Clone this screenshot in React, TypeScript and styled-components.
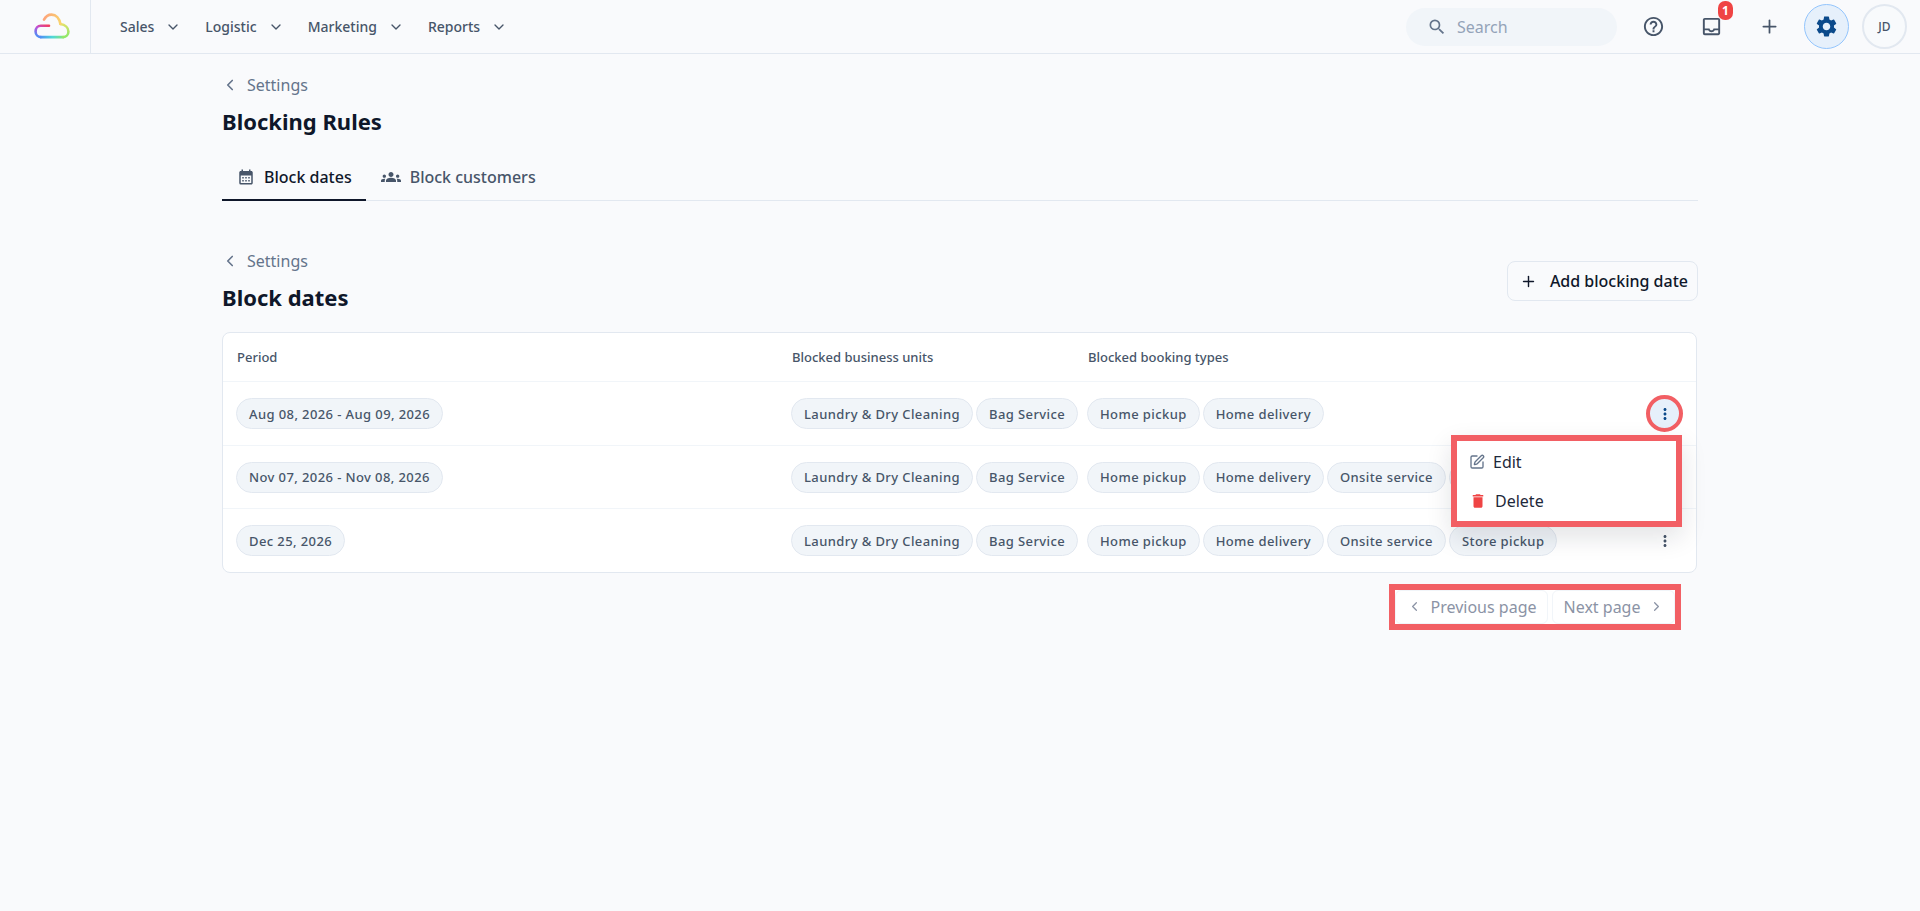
import React from 'react'
import styled, { createGlobalStyle } from 'styled-components'
import { ChevronDown, ChevronLeft, ChevronRight, Plus, SquarePen } from 'lucide-react'
import {
  MdCalendarMonth,
  MdDelete,
  MdGroups,
  MdMoreVert,
  MdOutlineHelpOutline,
  MdOutlineInbox,
  MdSearch,
  MdSettings,
} from 'react-icons/md'

const navItems = ['Sales', 'Logistic', 'Marketing', 'Reports']

const units = ['Laundry & Dry Cleaning', 'Bag Service']

const rows = [
  { period: 'Aug 08, 2026 - Aug 09, 2026', types: ['Home pickup', 'Home delivery'], active: true },
  {
    period: 'Nov 07, 2026 - Nov 08, 2026',
    types: ['Home pickup', 'Home delivery', 'Onsite service', 'Store pickup'],
    active: false,
  },
  {
    period: 'Dec 25, 2026',
    types: ['Home pickup', 'Home delivery', 'Onsite service', 'Store pickup'],
    active: false,
  },
]

function Logo() {
  return (
    <svg width="36" height="26" viewBox="0 0 36 26" fill="none" strokeWidth="2.6" strokeLinecap="round">
      <defs>
        <linearGradient id="lg1" gradientUnits="userSpaceOnUse" x1="14" y1="12" x2="6" y2="25">
          <stop offset="0" stopColor="#f43f5e" />
          <stop offset="0.5" stopColor="#c04fd8" />
          <stop offset="1" stopColor="#4f8ef5" />
        </linearGradient>
        <linearGradient id="lg2" gradientUnits="userSpaceOnUse" x1="6" y1="24" x2="31" y2="24">
          <stop offset="0" stopColor="#4f8ef5" />
          <stop offset="0.5" stopColor="#4fd8d8" />
          <stop offset="1" stopColor="#8fe86a" />
        </linearGradient>
        <linearGradient id="lg3" gradientUnits="userSpaceOnUse" x1="31" y1="24" x2="26" y2="9">
          <stop offset="0" stopColor="#8fe86a" />
          <stop offset="1" stopColor="#f5e06a" />
        </linearGradient>
        <linearGradient id="lg4" gradientUnits="userSpaceOnUse" x1="26" y1="10" x2="10" y2="6">
          <stop offset="0" stopColor="#f9d36e" />
          <stop offset="1" stopColor="#fda57a" />
        </linearGradient>
      </defs>
      <path d="M15 12.7H6.8C3.8 12.7 1.6 15.3 1.6 18.4C1.6 21.6 3.9 24.1 6.8 24.1" stroke="url(#lg1)" />
      <path d="M6.8 24.1H29.2" stroke="url(#lg2)" />
      <path d="M29.2 24.1C32.2 24.1 34.4 21.6 34.4 18.4C34.4 14.8 31.2 11.8 26.4 11" stroke="url(#lg3)" />
      <path d="M26.4 11C25.4 5.4 21.9 1.6 17.6 1.6C14.4 1.6 11.6 3.6 10 6.6" stroke="url(#lg4)" />
    </svg>
  )
}

export default function App() {
  return (
    <>
      <GlobalStyle />
      <Header>
        <LogoBox>
          <Logo />
        </LogoBox>
        <Nav>
          {navItems.map((item) => (
            <NavItem key={item}>
              {item}
              <ChevronDown size={16} strokeWidth={2} />
            </NavItem>
          ))}
        </Nav>
        <HeaderRight>
          <SearchBox>
            <MdSearch size={20} color="#64748b" />
            <span>Search</span>
          </SearchBox>
          <IconButtons>
            <IconButton>
              <MdOutlineHelpOutline size={23} />
            </IconButton>
            <IconButton>
              <MdOutlineInbox size={23} />
              <Badge>1</Badge>
            </IconButton>
            <IconButton>
              <Plus size={21} strokeWidth={2} />
            </IconButton>
          </IconButtons>
          <GearButton>
            <MdSettings size={25} />
          </GearButton>
          <Avatar>JD</Avatar>
        </HeaderRight>
      </Header>

      <Main>
        <BackLink>
          <ChevronLeft size={18} strokeWidth={2.2} />
          Settings
        </BackLink>
        <Title>Blocking Rules</Title>

        <Tabs>
          <Tab $active>
            <MdCalendarMonth size={18} />
            Block dates
          </Tab>
          <Tab>
            <MdGroups size={20} />
            Block customers
          </Tab>
        </Tabs>

        <SectionHead>
          <div>
            <BackLink>
              <ChevronLeft size={18} strokeWidth={2.2} />
              Settings
            </BackLink>
            <Title>Block dates</Title>
          </div>
          <AddButton>
            <Plus size={17} strokeWidth={2} />
            Add blocking date
          </AddButton>
        </SectionHead>

        <Card>
          <HeadRow>
            <span>Period</span>
            <span>Blocked business units</span>
            <span>Blocked booking types</span>
          </HeadRow>
          {rows.map((row) => (
            <Row key={row.period}>
              <ChipList>
                <Chip>{row.period}</Chip>
              </ChipList>
              <ChipList>
                {units.map((u) => (
                  <Chip key={u}>{u}</Chip>
                ))}
              </ChipList>
              <ChipList>
                {row.types.map((t) => (
                  <Chip key={t}>{t}</Chip>
                ))}
              </ChipList>
              <DotsButton $active={row.active}>
                <MdMoreVert size={18} />
              </DotsButton>
            </Row>
          ))}
          <Menu>
            <MenuItem>
              <SquarePen size={16} color="#64748b" strokeWidth={2} />
              Edit
            </MenuItem>
            <MenuItem>
              <MdDelete size={18} color="#ef4444" />
              Delete
            </MenuItem>
          </Menu>
        </Card>

        <PagerRow>
          <Pager>
            <PageButton>
              <ChevronLeft size={15} strokeWidth={2} />
              Previous page
            </PageButton>
            <PageButton>
              Next page
              <ChevronRight size={15} strokeWidth={2} />
            </PageButton>
          </Pager>
        </PagerRow>
      </Main>
    </>
  )
}

const GlobalStyle = createGlobalStyle`
  * {
    box-sizing: border-box;
  }

  html, body {
    margin: 0;
    padding: 0;
    min-height: 100%;
    background: #f9fafc;
    font-family: "Noto Sans", "Open Sans", sans-serif;
    color: #0f172a;
  }

  body {
    min-height: 911px;
  }
`

const Header = styled.header`
  display: flex;
  align-items: center;
  height: 54px;
  border-bottom: 1px solid #e2e8f0;
`

const LogoBox = styled.div`
  display: flex;
  align-items: center;
  justify-content: flex-start;
  width: 91px;
  height: 100%;
  padding-left: 34px;
  padding-bottom: 1px;
  border-right: 1px solid #e2e8f0;
`

const Nav = styled.nav`
  display: flex;
  align-items: center;
  gap: 24px;
  padding-left: 29px;
`

const NavItem = styled.div`
  display: flex;
  align-items: center;
  gap: 11px;
  font-size: 14px;
  font-weight: 500;
  color: #475569;
`

const HeaderRight = styled.div`
  display: flex;
  align-items: center;
  margin-left: auto;
  padding-right: 13px;
`

const SearchBox = styled.div`
  display: flex;
  align-items: center;
  gap: 10px;
  width: 211px;
  height: 38px;
  padding-left: 21px;
  margin-right: 19px;
  border-radius: 19px;
  background: #f1f5f9;
  font-size: 16px;
  color: #94a3b8;
`

const IconButtons = styled.div`
  display: flex;
  align-items: center;
  gap: 24px;
  margin-right: 18px;
`

const IconButton = styled.div`
  position: relative;
  display: flex;
  align-items: center;
  justify-content: center;
  width: 34px;
  height: 34px;
  color: #475569;
`

const Badge = styled.span`
  position: absolute;
  top: -9px;
  left: 24px;
  width: 15px;
  height: 19px;
  border-radius: 7px;
  background: #ef4444;
  color: #fff;
  font-size: 12px;
  font-weight: 700;
  line-height: 19px;
  text-align: center;
`

const GearButton = styled.div`
  display: flex;
  align-items: center;
  justify-content: center;
  width: 45px;
  height: 45px;
  margin-right: 13px;
  border-radius: 50%;
  border: 1px solid #93c5fd;
  background: #e6f0fb;
  color: #0b4a8b;
`

const Avatar = styled.div`
  display: flex;
  align-items: center;
  justify-content: center;
  width: 45px;
  height: 45px;
  border-radius: 50%;
  border: 2px solid #e2e8f0;
  background: #f8fafc;
  font-size: 12px;
  font-weight: 500;
  color: #475569;
`

const Main = styled.main`
  width: 1476px;
  margin: 0 auto;
  padding-top: 19px;
`

const BackLink = styled.div`
  display: flex;
  align-items: center;
  gap: 8px;
  height: 24px;
  padding-left: 0;
  font-size: 16px;
  line-height: 24px;
  color: #64748b;

  svg {
    margin-left: -1px;
  }
`

const Title = styled.h1`
  margin: 9px 0 0;
  font-size: 22px;
  line-height: 30px;
  font-weight: 700;
  color: #0f172a;
`

const Tabs = styled.div`
  display: flex;
  height: 44px;
  margin-top: 21px;
  border-bottom: 1px solid #e2e8f0;
`

const Tab = styled.div<{ $active?: boolean }>`
  display: flex;
  align-items: center;
  gap: 9px;
  height: 44px;
  padding: 0 14px 2px 15px;
  border-bottom: 2px solid ${(p) => (p.$active ? '#0f172a' : 'transparent')};
  font-size: 16px;
  font-weight: 500;
  color: ${(p) => (p.$active ? '#0f172a' : '#475569')};

  svg {
    color: #475569;
  }
`

const SectionHead = styled.div`
  display: flex;
  align-items: flex-start;
  justify-content: space-between;
  margin-top: 48px;
`

const AddButton = styled.button`
  display: flex;
  align-items: center;
  gap: 13px;
  height: 40px;
  margin-top: 12px;
  padding: 0 9px 0 12px;
  border: 1px solid #e2e8f0;
  border-radius: 8px;
  background: #f9fafc;
  font-family: inherit;
  font-size: 16px;
  font-weight: 500;
  color: #0f172a;
`

const Card = styled.section`
  position: relative;
  width: 1475px;
  margin-top: 20px;
  border: 1px solid #e2e8f0;
  border-radius: 8px;
  background: #fff;
`

const HeadRow = styled.div`
  display: grid;
  grid-template-columns: 555px 296px 1fr;
  align-items: center;
  height: 48px;
  padding-left: 14px;
  font-size: 13px;
  font-weight: 500;
  color: #475569;
`

const Row = styled.div`
  display: grid;
  grid-template-columns: 555px 296px 1fr 37px;
  align-items: center;
  height: 64px;
  padding: 0 13px 0 13px;
  border-top: 1px solid #f1f5f9;
  margin-bottom: -0.4px;
`

const ChipList = styled.div`
  display: flex;
  gap: 3px;
  white-space: nowrap;
`

const Chip = styled.span`
  display: inline-flex;
  align-items: center;
  height: 31px;
  padding: 0 12px;
  border: 1px solid #e2e8f0;
  border-radius: 16px;
  background: #f1f5f9;
  font-size: 13px;
  font-weight: 500;
  letter-spacing: 0.4px;
  color: #475569;
`

const DotsButton = styled.div<{ $active?: boolean }>`
  display: flex;
  align-items: center;
  justify-content: center;
  width: 37px;
  height: 37px;
  border-radius: 50%;
  border: 4px solid ${(p) => (p.$active ? '#f25f64' : 'transparent')};
  background: ${(p) => (p.$active ? '#e6f0fb' : 'transparent')};
  color: ${(p) => (p.$active ? '#0b4a8b' : '#475569')};
`

const Menu = styled.div`
  position: absolute;
  top: 102px;
  left: 1228px;
  display: flex;
  flex-direction: column;
  width: 231px;
  height: 92px;
  padding-top: 1px;
  border: 6px solid #f25f64;
  background: #fff;
  box-shadow: 0 10px 24px rgba(15, 23, 42, 0.12);
`

const MenuItem = styled.div`
  display: flex;
  align-items: center;
  gap: 8px;
  height: 39px;
  padding-left: 12px;
  font-size: 16px;
  color: #1e293b;

  svg {
    flex: none;
  }
`

const PagerRow = styled.div`
  display: flex;
  justify-content: flex-end;
  margin-top: 11px;
  padding-right: 17px;
`

const Pager = styled.div`
  display: flex;
  gap: 4px;
  width: 292px;
  height: 46px;
  border: 6px solid #f25f64;
  background: #fff;
`

const PageButton = styled.div`
  display: flex;
  flex: 1 1 auto;
  align-items: center;
  justify-content: space-between;
  padding: 0 10px 0 11px;
  border: 1px solid #f1f5f9;
  border-radius: 6px;
  font-size: 16px;
  color: #8b93a5;
`
